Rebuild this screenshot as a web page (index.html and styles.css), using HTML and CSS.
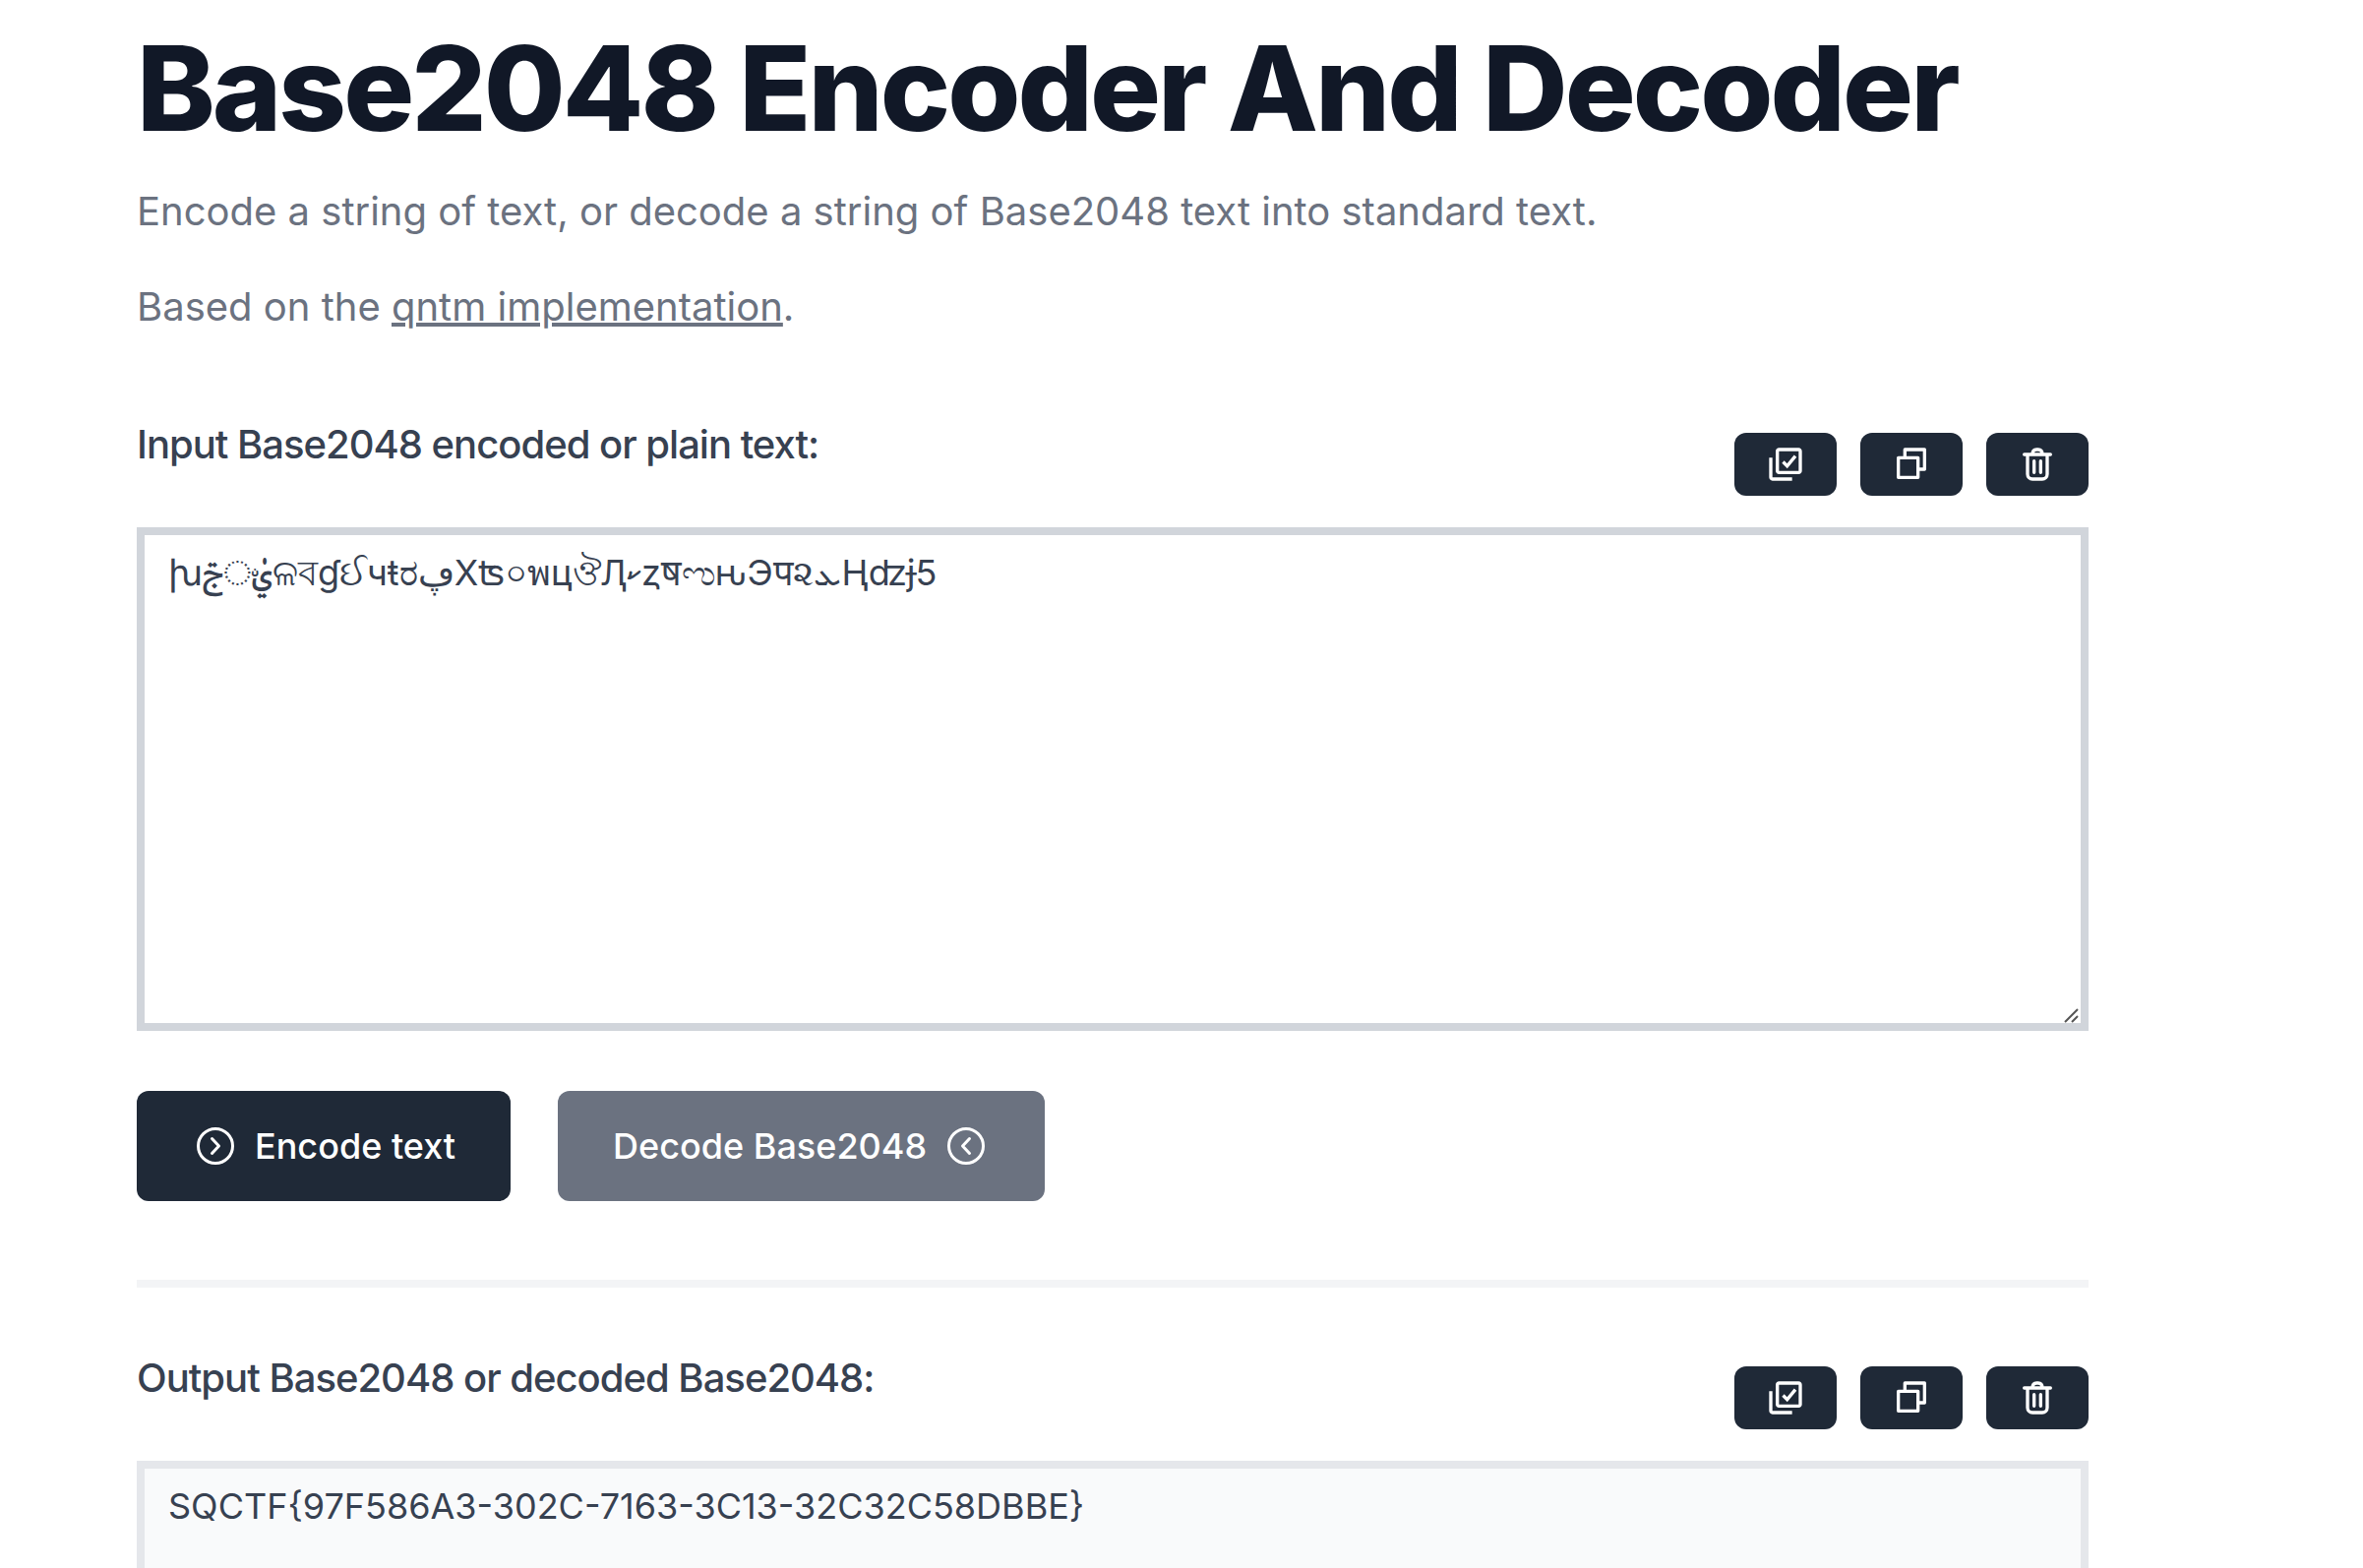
FILE: index.html
```html
<!DOCTYPE html>
<html lang="en">
<head>
<meta charset="utf-8">
<title>Base2048 Encoder And Decoder</title>
<link rel="stylesheet" href="styles.css">
</head>
<body>
<svg class="sprite" aria-hidden="true">
  <symbol id="icon-select" viewBox="0 0 24 24">
    <path fill="currentColor" d="M20 2H8c-1.103 0-2 .897-2 2v12c0 1.103.897 2 2 2h12c1.103 0 2-.897 2-2V4c0-1.103-.897-2-2-2zM8 16V4h12l.002 12H8z"/>
    <path fill="currentColor" d="M4 8H2v12c0 1.103.897 2 2 2h12v-2H4V8zm8.933 3.519-1.726-1.726-1.414 1.414 3.274 3.274 5.702-6.84-1.538-1.282z"/>
  </symbol>
  <symbol id="icon-copy" viewBox="0 0 24 24">
    <path fill="none" stroke="currentColor" stroke-width="2" stroke-linejoin="round" d="M4 8h12v12H4zM8 7.500V3h12v12h-3.500"/>
  </symbol>
  <symbol id="icon-trash" viewBox="0 0 24 24">
    <path fill="none" stroke="currentColor" stroke-width="2" stroke-linecap="round" stroke-linejoin="round" d="M4 6h16M6 6v12a3 3 0 0 0 3 3h6a3 3 0 0 0 3-3V6M9 6c0-2 1-3 2.500-3h1c1.500 0 2.500 1 2.500 3M10 10v7M14 10v7"/>
  </symbol>
  <symbol id="icon-next" viewBox="0 0 48 48">
    <g fill="none" stroke="currentColor" stroke-width="3" stroke-linecap="round" stroke-linejoin="round"><circle cx="24" cy="24" r="17.500"/><path d="M20.500 16.500 27.500 24l-7 7.500"/></g>
  </symbol>
  <symbol id="icon-prev" viewBox="0 0 48 48">
    <g fill="none" stroke="currentColor" stroke-width="3" stroke-linecap="round" stroke-linejoin="round"><circle cx="24" cy="24" r="17.500"/><path d="M27.500 16.500 20.500 24l7 7.500"/></g>
  </symbol>
</svg>
<main class="page">
  <h1 class="title">Base2048 Encoder And Decoder</h1>
  <p class="intro">Encode a string of text, or decode a string of Base2048 text into standard text.</p>
  <p class="intro">Based on the <a class="link" href="#qntm">qntm implementation</a>.</p>

  <form class="converter">
    <div class="field-head">
      <label class="label" for="input">Input Base2048 encoded or plain text:</label>
      <div class="tools">
        <button class="tool" type="button" aria-label="Select all"><svg class="tool-icon"><use href="#icon-select"/></svg></button>
        <button class="tool" type="button" aria-label="Copy"><svg class="tool-icon"><use href="#icon-copy"/></svg></button>
        <button class="tool" type="button" aria-label="Clear"><svg class="tool-icon"><use href="#icon-trash"/></svg></button>
      </div>
    </div>
    <div class="box-wrap">
      <textarea class="box" id="input" spellcheck="false">խࢢൎࢺଳবɠઈчŧರڥXʦ০พцঔԮކȥषಌԋЭप૨ܥҢʣɉ5</textarea>
      <svg class="grip" viewBox="0 0 16 16" aria-hidden="true"><path fill="none" stroke="#555" stroke-width="2" d="M1 15 14 2M8 15l6-6"/></svg>
    </div>
    <div class="actions">
      <button class="action" type="button"><svg class="action-icon"><use href="#icon-next"/></svg>Encode text</button>
      <button class="action action-muted" type="button">Decode Base2048<svg class="action-icon"><use href="#icon-prev"/></svg></button>
    </div>
    <hr class="rule">
    <div class="field-head">
      <label class="label" for="output">Output Base2048 or decoded Base2048:</label>
      <div class="tools">
        <button class="tool" type="button" aria-label="Select all"><svg class="tool-icon"><use href="#icon-select"/></svg></button>
        <button class="tool" type="button" aria-label="Copy"><svg class="tool-icon"><use href="#icon-copy"/></svg></button>
        <button class="tool" type="button" aria-label="Clear"><svg class="tool-icon"><use href="#icon-trash"/></svg></button>
      </div>
    </div>
    <textarea class="box box-output" id="output" readonly spellcheck="false">SQCTF{97F586A3-302C-7163-3C13-32C32C58DBBE}</textarea>
  </form>
</main>
</body>
</html>
```
FILE: styles.css
```css
* { box-sizing: border-box; margin: 0; }
body {
  height: 100vh;
  overflow: hidden;
  background: #fff;
  color: #374151;
  font-family: Inter, "Noto Sans", sans-serif;
}
.sprite { display: none; }
.page { padding: 30px 279px 0 139px; }
.title {
  margin-bottom: 32px;
  color: #111827;
  font-size: 120px;
  font-weight: 800;
  line-height: 120px;
  letter-spacing: -0.025em;
}
.intro {
  margin-bottom: 32px;
  color: #6b7280;
  font-size: 40px;
  line-height: 65px;
}
.link { color: inherit; }
.converter { padding-top: 48px; }
.field-head {
  display: flex;
  justify-content: space-between;
  align-items: flex-start;
}
.label {
  font-size: 40px;
  font-weight: 500;
  line-height: 56px;
  letter-spacing: -0.025em;
}
.tools { display: flex; gap: 24px; padding: 16px 0 32px; }
.tool {
  display: flex;
  padding: 12px 32px;
  border: 0;
  border-radius: 12px;
  background: #1f2937;
  color: #fff;
}
.tool-icon { width: 40px; height: 40px; }
.box-wrap { position: relative; }
.box {
  display: block;
  width: 100%;
  height: 512px;
  padding: 12px 24px;
  border: 8px solid #d1d5db;
  border-radius: 0;
  background: #fff;
  color: #374151;
  font: inherit;
  font-size: 36px;
  line-height: 52px;
  resize: none;
}
.box-output { border-color: #e5e7eb; background: #f9fafb; }
.grip {
  position: absolute;
  right: 9px;
  bottom: 8px;
  width: 16px;
  height: 16px;
  pointer-events: none;
}
.actions { display: flex; gap: 48px; padding: 61px 0 80px; }
.action {
  display: flex;
  align-items: center;
  gap: 16px;
  padding: 28px 56px;
  border: 0;
  border-radius: 12px;
  background: #1f2937;
  color: #fff;
  font: inherit;
  font-size: 36px;
  font-weight: 500;
  line-height: 56px;
}
.action-muted { background: #6b7280; }
.action-icon { width: 48px; height: 48px; }
.rule { margin-bottom: 64px; border: 0; border-top: 8px solid #f3f4f6; }
```
